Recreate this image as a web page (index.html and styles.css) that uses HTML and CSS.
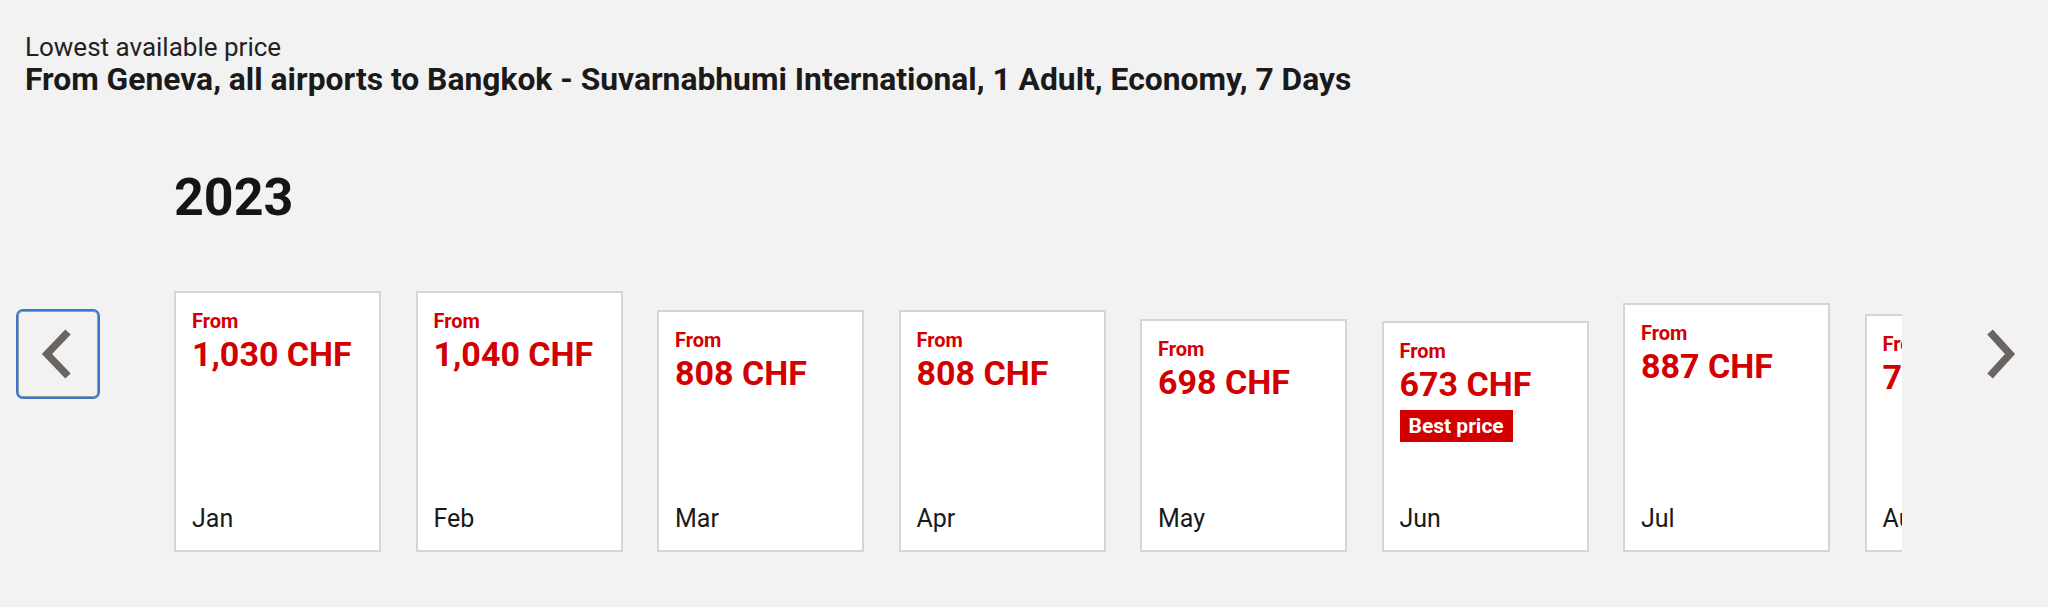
FILE: index.html
```html
<!DOCTYPE html>
<html lang="en">
<head>
<meta charset="utf-8">
<title>Lowest available price</title>
<link rel="stylesheet" href="styles.css">
</head>
<body>
<header class="intro">
  <p class="intro-label">Lowest available price</p>
  <h1 class="intro-title">From Geneva, all airports to Bangkok - Suvarnabhumi International, 1 Adult, Economy, 7 Days</h1>
</header>
<section class="calendar">
  <h2 class="year">2023</h2>
  <div class="carousel">
    <button class="nav nav-prev" type="button" aria-label="Previous">
      <svg viewBox="0 0 40 60" width="40" height="60"><path d="M30 8 L9 30 L30 52" fill="none" stroke="#6b6460" stroke-width="7.5"/></svg>
    </button>
    <div class="track">
      <a class="card" style="height:261px"><span class="from">From</span><span class="price">1,030 CHF</span><span class="month">Jan</span></a>
      <a class="card" style="height:261px"><span class="from">From</span><span class="price">1,040 CHF</span><span class="month">Feb</span></a>
      <a class="card" style="height:242px"><span class="from">From</span><span class="price">808 CHF</span><span class="month">Mar</span></a>
      <a class="card" style="height:242px"><span class="from">From</span><span class="price">808 CHF</span><span class="month">Apr</span></a>
      <a class="card" style="height:233px"><span class="from">From</span><span class="price">698 CHF</span><span class="month">May</span></a>
      <a class="card" style="height:231px"><span class="from">From</span><span class="price">673 CHF</span><span class="badge">Best price</span><span class="month">Jun</span></a>
      <a class="card" style="height:249px"><span class="from">From</span><span class="price">887 CHF</span><span class="month">Jul</span></a>
      <a class="card" style="height:238px"><span class="from">From</span><span class="price">757 CHF</span><span class="month">Aug</span></a>
      <a class="card" style="height:240px"><span class="from">From</span><span class="price">770 CHF</span><span class="month">Sep</span></a>
    </div>
    <button class="nav nav-next" type="button" aria-label="Next">
      <svg viewBox="0 0 40 60" width="40" height="60"><path d="M10 8 L30 30 L10 52" fill="none" stroke="#6b6460" stroke-width="7.5"/></svg>
    </button>
  </div>
</section>
</body>
</html>
```
FILE: styles.css
```css
html, body {
  margin: 0;
  padding: 0;
  background: #f2f2f2;
  font-family: Roboto, "Liberation Sans", Arial, sans-serif;
  color: #1a1a1a;
}

.intro {
  padding: 33px 0 0 25px;
}

.intro-label {
  margin: 0;
  font-size: 26px;
  line-height: 28px;
  font-weight: 400;
  color: #222;
}

.intro-title {
  margin: 0;
  font-size: 31.8px;
  line-height: 36px;
  font-weight: 700;
  color: #1a1a1a;
}

.calendar {
  padding-top: 71px;
}

.year {
  margin: 0 0 0 174px;
  font-size: 52px;
  line-height: 60px;
  font-weight: 700;
  color: #151515;
}

.carousel {
  display: flex;
  align-items: flex-start;
  margin-top: 63px;
  padding-left: 16px;
}

.nav {
  flex: none;
  width: 84px;
  height: 90px;
  margin-top: 18px;
  padding: 0;
  display: flex;
  align-items: center;
  justify-content: center;
  background: transparent;
  border: 0;
  border-radius: 7px;
  cursor: pointer;
}

.nav-prev {
  border: 2px solid #3677cf;
  box-shadow: inset 0 0 0 1px #9a9a9a;
}

.track {
  flex: none;
  width: 1728px;
  height: 261px;
  margin-left: 74px;
  margin-right: 56px;
  display: flex;
  align-items: flex-end;
  gap: 34.5px;
  overflow: hidden;
}

.card {
  flex: none;
  box-sizing: border-box;
  width: 207px;
  display: flex;
  flex-direction: column;
  align-items: flex-start;
  padding: 16px 16px 15px 16px;
  background: #fff;
  border: 2px solid #d5d5d5;
  color: #1a1a1a;
  text-decoration: none;
}

.from {
  font-size: 20px;
  line-height: 24px;
  font-weight: 700;
  color: #d20000;
}

.price {
  margin-top: 1px;
  font-size: 34px;
  line-height: 40px;
  font-weight: 700;
  color: #d20000;
  white-space: nowrap;
}

.badge {
  margin-top: 6px;
  padding: 0 9px;
  background: #d20000;
  color: #fff;
  font-size: 21px;
  line-height: 32px;
  font-weight: 700;
}

.month {
  margin-top: auto;
  font-size: 25px;
  line-height: 32px;
  font-weight: 400;
  color: #1a1a1a;
}
```
